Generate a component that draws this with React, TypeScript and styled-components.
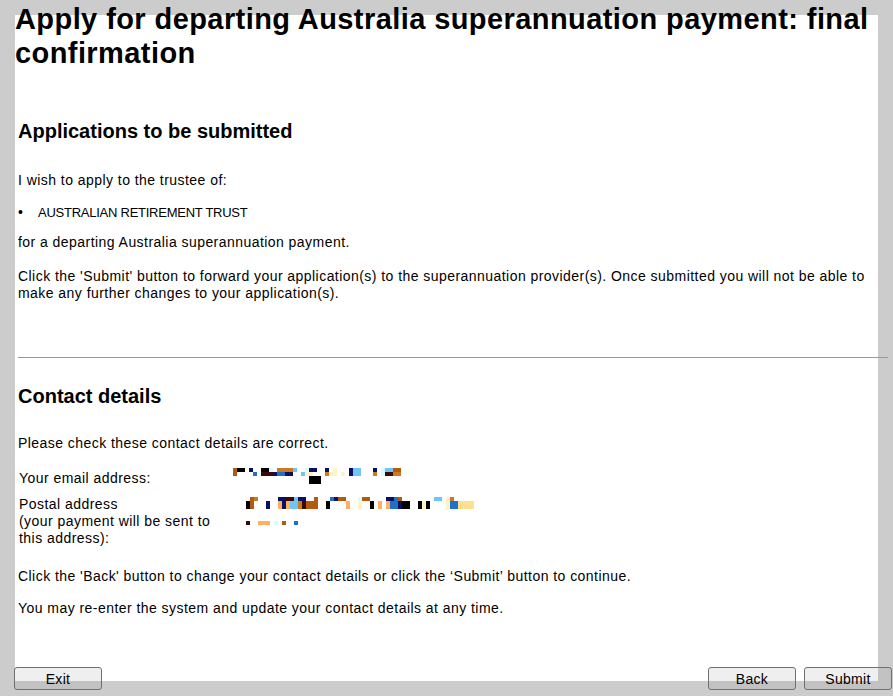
import React from "react";
import styled, { createGlobalStyle } from "styled-components";

const GlobalStyle = createGlobalStyle`
  html, body {
    margin: 0;
    padding: 0;
    height: 696px;
    background: #cccccc;
  }
  body {
    overflow: hidden;
    font-family: "Liberation Sans", Arial, sans-serif;
    color: #000;
  }
  #root {
    height: 696px;
  }
`;

const Panel = styled.main`
  width: 863px;
  height: 666px;
  margin: 15px 0 0 15px;
  background: #fff;
  display: flex;
  flex-direction: column;
  overflow: visible;
`;

const Title = styled.h1`
  margin: -13px 0 0 0;
  font-size: 29px;
  line-height: 34px;
  letter-spacing: 0.42px;
  font-weight: bold;
`;

const Section = styled.section<{ $mt: number }>`
  margin-top: ${(p) => p.$mt}px;
  padding-left: 3px;
  display: flex;
  flex-direction: column;
`;

const SectionHeading = styled.h2`
  margin: 0;
  font-size: 20px;
  line-height: 23px;
  font-weight: bold;
`;

const Text = styled.p<{ $mt: number }>`
  margin: ${(p) => p.$mt}px 0 0 0;
  font-size: 14px;
  line-height: 17px;
  letter-spacing: 0.45px;
`;

const BulletList = styled.ul`
  margin: 15px 0 0 0;
  padding: 0;
  font-size: 13px;
  line-height: 17px;
  letter-spacing: -0.25px;
  list-style: none;

  li::before {
    content: "•";
    display: inline-block;
    width: 20px;
    font-size: 14px;
    letter-spacing: 0;
  }
`;

const Divider = styled.hr`
  margin: 55px -10px 0 0;
  border: none;
  border-top: 1px solid #999999;
  height: 0;
`;

const DetailsGrid = styled.div`
  margin-top: 18px;
  display: grid;
  grid-template-columns: 215px 1fr;
  row-gap: 9px;
  font-size: 14px;
  line-height: 17px;
  letter-spacing: 0.45px;
`;

const Label = styled.div`
  padding-left: 1px;
  width: 200px;
`;

const Value = styled.div<{ $indent: number; $shift: number }>`
  padding-left: ${(p) => p.$indent}px;
  margin-top: ${(p) => p.$shift}px;
`;

const Footer = styled.footer`
  margin: auto -14px -9px -1px;
  display: flex;
  align-items: center;
  gap: 8px;
`;

const Button = styled.button<{ $push?: boolean }>`
  width: 88px;
  height: 23px;
  margin-left: ${(p) => (p.$push ? "auto" : "0")};
  padding: 1px 0 0;
  border: 1px solid #707070;
  border-radius: 3px;
  background: rgba(128, 128, 128, 0.13);
  font-family: "Liberation Sans", Arial, sans-serif;
  font-size: 14px;
  letter-spacing: 0.3px;
  color: #000;
`;

const palette: Record<string, string> = {
  k: "#000000",
  m: "#3a0a0a",
  r: "#b45a10",
  n: "#0a1060",
  b: "#2070c8",
  l: "#70c4f8",
  o: "#cc7a22",
  p: "#ffb060",
  c: "#fff2c4",
  y: "#ffe090",
  a: "#d8fcff",
};

function PixelArt({ rows, cell, rowHeight }: { rows: string[]; cell: number; rowHeight: number }) {
  const width = Math.max(...rows.map((r) => r.length)) * cell;
  return (
    <svg width={width} height={rows.length * rowHeight} style={{ display: "block" }}>
      {rows.map((row, y) =>
        row.split("").map((ch, x) =>
          palette[ch] ? (
            <rect key={`${x}-${y}`} x={x * cell} y={y * rowHeight} width={cell} height={rowHeight} fill={palette[ch]} />
          ) : null
        )
      )}
    </svg>
  );
}

const emailRows = [
  "rkk.n..kka.ooool..ann..n.c...nll...n.allrr.",
  "r....b.mmmnbbnn..lcc...occ.c.nll...o.ammoo.",
  "...................kkk.....................",
  "...................kkk.....................",
];

const postalRow0 = ".ro.....nnmmlnn..r...bnrr...arr....nnbr........ll.co.....";
const postalRow1 = "kr...n..pnpllomrrr..k....p..c..k.p.pbbnkk..kck....cbbyyyy";
const postalRows = [postalRow0, postalRow1, postalRow1, "", "", "", "m..ppp.a.r..b"];

export default function App() {
  return (
    <>
      <GlobalStyle />
      <Panel>
        <Title>Apply for departing Australia superannuation payment: final confirmation</Title>

        <Section $mt={50}>
          <SectionHeading>Applications to be submitted</SectionHeading>
          <Text $mt={29}>I wish to apply to the trustee of:</Text>
          <BulletList>
            <li>AUSTRALIAN RETIREMENT TRUST</li>
          </BulletList>
          <Text $mt={13}>for a departing Australia superannuation payment.</Text>
          <Text $mt={17}>
            Click the 'Submit' button to forward your application(s) to the superannuation provider(s). Once
            submitted you will not be able to make any further changes to your application(s).
          </Text>
          <Divider />
        </Section>

        <Section $mt={27}>
          <SectionHeading>Contact details</SectionHeading>
          <Text $mt={27}>Please check these contact details are correct.</Text>
          <DetailsGrid>
            <Label>Your email address:</Label>
            <Value $indent={0} $shift={-2}>
              <PixelArt rows={emailRows} cell={4} rowHeight={4} />
            </Value>
            <Label>
              Postal address
              <br />
              (your payment will be sent to this address):
            </Label>
            <Value $indent={13} $shift={1}>
              <PixelArt rows={postalRows} cell={4} rowHeight={4} />
            </Value>
          </DetailsGrid>
          <Text $mt={21}>
            Click the 'Back' button to change your contact details or click the ‘Submit’ button to continue.
          </Text>
          <Text $mt={15}>You may re-enter the system and update your contact details at any time.</Text>
        </Section>

        <Footer>
          <Button>Exit</Button>
          <Button $push>Back</Button>
          <Button>Submit</Button>
        </Footer>
      </Panel>
    </>
  );
}
